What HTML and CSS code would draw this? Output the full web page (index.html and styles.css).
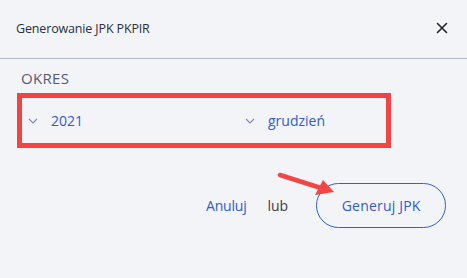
FILE: index.html
```html
<!DOCTYPE html>
<html lang="pl">
<head>
<meta charset="utf-8">
<link rel="stylesheet" href="styles.css">
</head>
<body>
<div class="dialog">
  <header class="head">
    <span class="title">Generowanie JPK PKPIR</span>
    <svg class="close" width="12" height="12" viewBox="0 0 12 12"><path d="M1.5 1.5L10.5 10.5M10.5 1.5L1.5 10.5" stroke="#1f2230" stroke-width="1.6" stroke-linecap="round"/></svg>
  </header>
  <main class="body">
    <div class="label">OKRES</div>
    <div class="period">
      <div class="select year">
        <svg class="chev" width="10" height="6" viewBox="0 0 10 6"><path d="M1 1l4 4 4-4" fill="none" stroke="#7d88b0" stroke-width="1.1"/></svg>
        <span>2021</span>
      </div>
      <div class="select month">
        <svg class="chev" width="10" height="6" viewBox="0 0 10 6"><path d="M1 1l4 4 4-4" fill="none" stroke="#7d88b0" stroke-width="1.1"/></svg>
        <span>grudzień</span>
      </div>
    </div>
    <div class="actions">
      <a class="cancel">Anuluj</a>
      <span class="or">lub</span>
      <button class="gen">Generuj JPK</button>
      <svg class="arrow" width="70" height="30" viewBox="0 0 70 30"><line x1="3" y1="4" x2="44" y2="17" stroke="#f24545" stroke-width="4.5" stroke-linecap="round"/><polygon points="57,21 38,24 46,9" fill="#f24545"/></svg>
    </div>
  </main>
</div>
</body>
</html>
```
FILE: styles.css
```css
html, body {
  margin: 0;
  padding: 0;
  background: #f3f4f8;
}
.dialog {
  width: 467px;
  height: 278px;
  font-family: "Open Sans", "Noto Sans", sans-serif;
}
.head {
  height: 58px;
  border-bottom: 1px solid #b1b8c9;
  display: flex;
  align-items: center;
  justify-content: space-between;
  padding: 0 19px 0 16px;
}
.title {
  font-size: 12.5px;
  color: #2b2f3c;
  letter-spacing: -0.15px;
  margin-top: -2px;
}
.close { margin-top: -2px; }
.body {
  padding: 10px 0 0 21px;
}
.label {
  font-size: 15px;
  color: #555b70;
  line-height: 19px;
  letter-spacing: 0.3px;
}
.period {
  margin: 5px 0 0 -4px;
  width: 364px;
  height: 45px;
  border: 5px solid #f34343;
  display: flex;
  align-items: center;
}
.select {
  display: flex;
  align-items: center;
  gap: 13px;
  font-size: 14px;
  color: #2f5ccf;
  letter-spacing: 0;
}
.year { padding-left: 6px; width: 217px; }
.chev { margin-top: 1px; }
.actions {
  position: relative;
  display: flex;
  align-items: center;
  margin: 35px 0 0 185px;
  font-size: 14px;
}
.cancel { color: #2f5ccf; letter-spacing: -0.2px; }
.or { color: #3a3d4a; margin-left: 21px; letter-spacing: 0; }
.gen {
  margin-left: 28px;
  width: 130px;
  height: 45px;
  border: 1.2px solid #2a64d2;
  border-radius: 23px;
  background: transparent;
  color: #2f5ccf;
  font-family: inherit;
  font-size: 14px;
  letter-spacing: 0.2px;
  padding: 0;
}
.arrow {
  position: absolute;
  left: 71px;
  top: -12px;
}
```
